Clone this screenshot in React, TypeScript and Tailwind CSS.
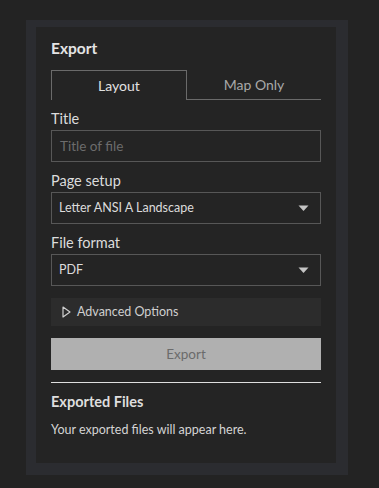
import { useState } from "react";

const font = { fontFamily: "Lato, 'Open Sans', sans-serif" };

function Caret() {
  return (
    <svg width="11" height="7" viewBox="0 0 11 7" className="shrink-0">
      <path d="M0.5 0.5 L10.5 0.5 L5.5 6 Z" fill="#c4c4c4" />
    </svg>
  );
}

function SelectBox({ value }: { value: string }) {
  return (
    <div className="mt-[2px] flex h-[32px] items-center justify-between border border-[#575757] pl-[7px] pr-[11px] text-[12.5px] text-[#dcdcdc]">
      <span>{value}</span>
      <Caret />
    </div>
  );
}

export default function App() {
  const [tab, setTab] = useState<"layout" | "map">("layout");

  return (
    <div className="relative h-[488px] w-[379px] overflow-hidden bg-[#232323]" style={font}>
      <div className="absolute left-[26px] top-[100px] text-[11px] italic leading-[13px] text-[#3b4150]">
        <p>r c</p>
        <p>wr</p>
      </div>
      <div className="absolute left-[26px] top-[20px] h-[455px] w-[322px] bg-[#2b2c30] pb-[12px] pl-[10px] pr-[12px] pt-[7px]">
        <div className="h-full bg-[#242424] px-[15px] pt-[11px] text-[#dedede]">
          <h2 className="text-[15.5px] font-bold leading-[20px] text-[#e4e4e4]">Export</h2>

          <div className="mt-[12px] flex h-[30px]">
            <button
              type="button"
              onClick={() => setTab("layout")}
              className={
                tab === "layout"
                  ? "flex-1 border border-b-0 border-[#6a6a6a] text-[14px] text-[#e2e2e2]"
                  : "flex-1 border-b border-[#6a6a6a] text-[14px] text-[#a8a8a8]"
              }
            >
              Layout
            </button>
            <button
              type="button"
              onClick={() => setTab("map")}
              className={
                tab === "map"
                  ? "flex-1 border border-b-0 border-[#6a6a6a] text-[14px] text-[#e2e2e2]"
                  : "flex-1 border-b border-[#6a6a6a] text-[14px] text-[#a8a8a8]"
              }
            >
              Map Only
            </button>
          </div>

          <label className="mt-[9px] block text-[14.5px] leading-[19px] text-[#dcdcdc]">Title</label>
          <div className="mt-[2px] flex h-[32px] items-center border border-[#575757] px-[8px] text-[13.5px] text-[#6c6c6c]">
            Title of file
          </div>

          <label className="mt-[9px] block text-[14.5px] leading-[19px] text-[#dcdcdc]">Page setup</label>
          <SelectBox value="Letter ANSI A Landscape" />

          <label className="mt-[9px] block text-[14.5px] leading-[19px] text-[#dcdcdc]">File format</label>
          <SelectBox value="PDF" />

          <div className="mt-[12px] flex h-[28px] items-center gap-[6px] bg-[#2c2c2c] pl-[11px] text-[12.5px] text-[#cfcfcf]">
            <svg width="9" height="12" viewBox="0 0 9 12">
              <path d="M1 1 L8 6 L1 11 Z" fill="none" stroke="#cfcfcf" strokeWidth="1.2" strokeLinejoin="round" />
            </svg>
            <span>Advanced Options</span>
          </div>

          <button
            type="button"
            className="mt-[12px] flex h-[32px] w-full items-center justify-center bg-[#b0b0b0] text-[13.5px] text-[#6b6b6b]"
          >
            Export
          </button>

          <div className="mt-[12px] h-[1px] bg-[#dedede]" />

          <h3 className="mt-[10px] text-[14.5px] font-bold leading-[18px] text-[#dedede]">Exported Files</h3>
          <p className="mt-[11px] text-[12.5px] leading-[16px] text-[#d4d4d4]">Your exported files will appear here.</p>
        </div>
      </div>
    </div>
  );
}
